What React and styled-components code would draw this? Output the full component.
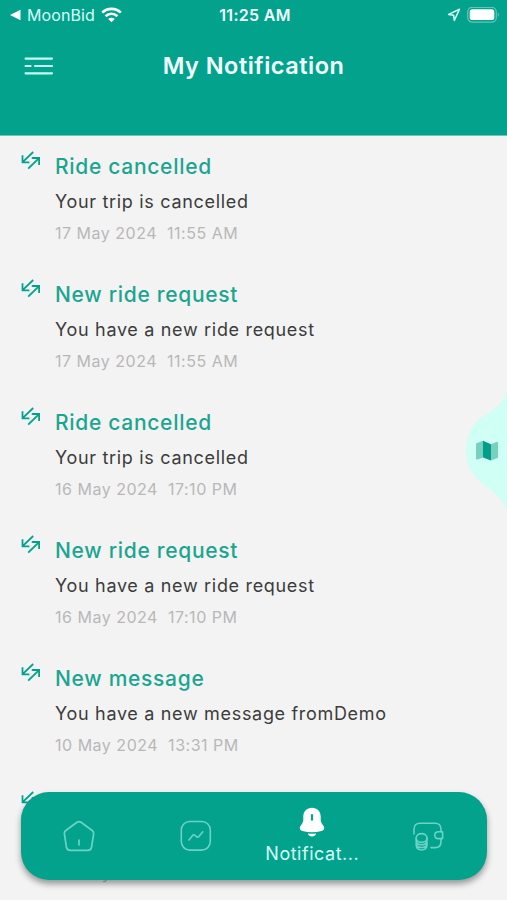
import React from 'react';
import styled, { createGlobalStyle } from 'styled-components';

const GlobalStyle = createGlobalStyle`
  * {
    box-sizing: border-box;
  }
  body {
    margin: 0;
    background: #f3f3f3;
    font-family: Inter, 'Liberation Sans', sans-serif;
  }
`;

const Screen = styled.div`
  position: relative;
  display: flex;
  flex-direction: column;
  width: 507px;
  height: 900px;
  overflow: hidden;
  background: #f3f3f3;
`;

const Header = styled.header`
  flex: none;
  height: 136px;
  background: #02a28d;
  border-bottom: 1px solid #6ac6ba;
  color: #f2fffd;
`;

const StatusBar = styled.div`
  display: grid;
  grid-template-columns: 1fr auto 1fr;
  align-items: center;
  height: 30px;
  padding: 0 7px 0 10px;
`;

const StatusGroup = styled.div`
  display: flex;
  align-items: center;
  justify-content: ${({ $end }) => ($end ? 'flex-end' : 'flex-start')};
  gap: 6px;
`;

const BackApp = styled.span`
  font-size: 16px;
  line-height: 20px;
  letter-spacing: 0.1px;
  color: #d9fff8;
`;

const Clock = styled.span`
  font-size: 16px;
  line-height: 20px;
  font-weight: 600;
  letter-spacing: 0.3px;
`;

const TitleBar = styled.div`
  display: grid;
  grid-template-columns: 30px 1fr 30px;
  align-items: center;
  height: 72px;
  padding: 0 24px;
`;

const PageTitle = styled.h1`
  margin: 0;
  font-size: 23.5px;
  line-height: 30px;
  font-weight: 600;
  letter-spacing: 0.5px;
  text-align: center;
`;

const List = styled.ul`
  flex: 1;
  margin: 0;
  padding: 0;
  list-style: none;
`;

const Item = styled.li`
  display: grid;
  grid-template-columns: 34px 1fr;
  height: 128px;
  padding: 15px 21px 0;
  color: #02a28d;
`;

const ItemTitle = styled.h2`
  margin: 1px 0 8px;
  font-size: 21px;
  line-height: 30px;
  font-weight: 500;
  letter-spacing: 0.7px;
  color: #1ba591;
`;

const ItemText = styled.p`
  margin: 0 0 9px;
  font-size: 18px;
  line-height: 24px;
  letter-spacing: 0.68px;
  color: #3c3c3c;
`;

const ItemDate = styled.time`
  display: block;
  font-size: 16px;
  line-height: 20px;
  letter-spacing: 0.51px;
  white-space: pre;
  color: #b8b8b8;
`;

const MapTab = styled.div`
  position: absolute;
  top: 386px;
  right: 0;
  line-height: 0;
`;

const TabBar = styled.nav`
  position: absolute;
  left: 21px;
  right: 20px;
  bottom: 20px;
  display: grid;
  grid-template-columns: repeat(4, 1fr);
  height: 88px;
  border-radius: 28px;
  background: #02a28d;
  box-shadow: 0 4px 6px rgba(0, 0, 0, 0.38);
`;

const Tab = styled.div`
  display: flex;
  flex-direction: column;
  align-items: center;
  justify-content: ${({ $active }) => ($active ? 'flex-start' : 'center')};
  padding-top: ${({ $active }) => ($active ? '15px' : '0')};
  color: ${({ $active }) => ($active ? '#ffffff' : '#6ad3c4')};
`;

const TabLabel = styled.span`
  margin-top: 5px;
  font-size: 18px;
  line-height: 24px;
  letter-spacing: 0.52px;
  color: #d5fff7;
`;

const WifiIcon = () => (
  <svg width="21" height="16" viewBox="0 0 21 16" fill="none" stroke="#fff" strokeWidth="2.6">
    <path d="M1.2 5.6C6.4.6 14.6.6 19.8 5.6" />
    <path d="M4.6 9.2C8 6 13 6 16.4 9.2" />
    <path d="M10.5 15.2 7.2 11.9C9.2 10.2 11.8 10.2 13.8 11.9Z" fill="#fff" stroke="none" />
  </svg>
);

const LocationIcon = () => (
  <svg width="14" height="14" viewBox="0 0 14 14" fill="none" stroke="#d9fff8" strokeWidth="1.5" strokeLinejoin="round">
    <path d="M12.5 1.2 1.6 6.4 6.6 7.2 7.3 12.4Z" />
  </svg>
);

const BatteryIcon = () => (
  <svg width="33" height="17" viewBox="0 0 33 17">
    <rect x="0.7" y="0.3" width="28.6" height="14.8" rx="4.6" fill="none" stroke="#63c6b9" strokeWidth="1.2" />
    <rect x="2.7" y="2.3" width="24.6" height="10.8" rx="2.6" fill="#fff" />
    <path d="M30.8 5.6C32.3 6.2 32.3 9.2 30.8 9.8Z" fill="#63c6b9" />
  </svg>
);

const MenuIcon = () => (
  <svg width="30" height="20" viewBox="0 0 30 20" stroke="#c9fff5" strokeWidth="2.2" strokeLinecap="round">
    <path d="M1.6 2.6H28M1.6 10H6.6M11 10H28M1.6 17.3H28" />
  </svg>
);

const SwapIcon = () => (
  <svg width="20" height="19" viewBox="0 0 20 19" fill="none" stroke="currentColor" strokeWidth="1.8">
    <path d="M12.2 1 1.6 11.2M1.5 4.2V11.3H8.4" />
    <path d="M7.2 17.6 18 7.2M10.8 7H18.1V14" />
  </svg>
);

const HomeIcon = () => (
  <svg width="32" height="32" viewBox="0 0 32 32" fill="none" stroke="currentColor" strokeWidth="1.7" strokeLinecap="round" strokeLinejoin="round">
    <path d="M14 2.3 2.8 10.5Q1.1 11.9 1.4 13.8L3.4 27Q4 30.3 7.3 30.3H24.7Q28 30.3 28.6 27L30.6 13.8Q30.9 11.9 29.2 10.5L18 2.3Q16 .8 14 2.3Z" />
    <path d="M16 20V25" />
  </svg>
);

const ActivityIcon = () => (
  <svg width="32" height="32" viewBox="0 0 32 32" fill="none" stroke="currentColor" strokeWidth="1.6" strokeLinecap="round" strokeLinejoin="round">
    <rect x="1.3" y="1.5" width="29" height="28.6" rx="8.5" />
    <path d="M9 20 12.6 15.4Q13.6 14.3 14.8 15.2L16.7 16.8Q17.9 17.6 18.9 16.4L22.8 11.8" />
  </svg>
);

const BellIcon = () => (
  <svg width="26" height="30" viewBox="0 0 26 30">
    <path
      d="M13 .8C7.8 .8 4.3 4.6 4.3 9.6V13C4.3 14.6 3.7 15.6 2.5 17.4L1.2 19.5C0 21.7 1.1 23.4 3.4 24C9.6 25.8 16.4 25.8 22.6 24C24.9 23.4 26 21.7 24.8 19.5L23.5 17.4C22.3 15.6 21.7 14.6 21.7 13V9.6C21.7 4.6 18.2 .8 13 .8Z"
      fill="currentColor"
    />
    <path d="M8.8 26.4Q13 27.3 17.2 26.4Q16.2 29.4 13 29.4T8.8 26.4Z" fill="currentColor" />
    <path d="M13 8V12.8" stroke="#02a28d" strokeWidth="2.1" strokeLinecap="round" />
  </svg>
);

const WalletIcon = () => (
  <svg width="32" height="30" viewBox="0 0 32 30" fill="none" stroke="currentColor" strokeWidth="1.6" strokeLinecap="round" strokeLinejoin="round">
    <path d="M1 13V8.4Q1 2.2 7.2 2.2H22Q28 2.2 28 8.4V10.8" />
    <path d="M28 17.6V20.4Q28 26.6 22 26.6H18" />
    <path d="M29.6 10.8H25.6Q21.8 10.8 21.8 14.2T25.6 17.6H29.6Z" />
    <ellipse cx="8.6" cy="17" rx="5.4" ry="4.4" />
    <path d="M3.2 17V24.5Q3.8 29 8.6 29T14 24.5V17M3.2 20.2Q4.2 23.8 8.6 23.8T14 20.2M3.2 23.2Q4.2 26.5 8.6 26.5T14 23.2" />
  </svg>
);

const MapHandle = () => (
  <svg width="42" height="128" viewBox="0 0 42 128">
    <path d="M42 6C37 17 31 22 22 28C7 36 1 50 1 65C1 81 9 92 21 100C31 107 37 114 42 124Z" fill="#cffff5" />
    <path d="M11 57.4 18 54.8V71.5L12.6 73.4Q11 73.8 11 72.3Z" fill="#78d0c1" />
    <path d="M18 54.8 26 58.2V74.6L18 71.5Z" fill="#039e89" />
    <path d="M26 58.2 31.4 55.9Q33 55.4 33 57V71.8L26 74.6Z" fill="#78d0c1" />
  </svg>
);

const notifications = [
  { title: 'Ride cancelled', text: 'Your trip is cancelled', date: '17 May 2024  11:55 AM' },
  { title: 'New ride request', text: 'You have a new ride request', date: '17 May 2024  11:55 AM' },
  { title: 'Ride cancelled', text: 'Your trip is cancelled', date: '16 May 2024  17:10 PM' },
  { title: 'New ride request', text: 'You have a new ride request', date: '16 May 2024  17:10 PM' },
  { title: 'New message', text: 'You have a new message fromDemo', date: '10 May 2024  13:31 PM' },
  { title: 'Ride cancelled', text: 'Your trip is cancelled', date: '10 May 2024  13:31 PM' },
];

const Notification = ({ notification: { title, text, date } }) => (
  <Item>
    <SwapIcon />
    <div>
      <ItemTitle>{title}</ItemTitle>
      <ItemText>{text}</ItemText>
      <ItemDate>{date}</ItemDate>
    </div>
  </Item>
);

const App = () => (
  <>
    <GlobalStyle />
    <Screen>
      <Header>
        <StatusBar>
          <StatusGroup>
            <svg width="11" height="12" viewBox="0 0 11 12">
              <path d="M0 6 10.5 .8V11.2Z" fill="#fff" />
            </svg>
            <BackApp>MoonBid</BackApp>
            <WifiIcon />
          </StatusGroup>
          <Clock>11:25 AM</Clock>
          <StatusGroup $end>
            <LocationIcon />
            <BatteryIcon />
          </StatusGroup>
        </StatusBar>
        <TitleBar>
          <MenuIcon />
          <PageTitle>My Notification</PageTitle>
        </TitleBar>
      </Header>
      <List>
        {notifications.map((notification, index) => (
          <Notification key={index} notification={notification} />
        ))}
      </List>
      <MapTab>
        <MapHandle />
      </MapTab>
      <TabBar>
        <Tab>
          <HomeIcon />
        </Tab>
        <Tab>
          <ActivityIcon />
        </Tab>
        <Tab $active>
          <BellIcon />
          <TabLabel>Notificat...</TabLabel>
        </Tab>
        <Tab>
          <WalletIcon />
        </Tab>
      </TabBar>
    </Screen>
  </>
);

export default App;
